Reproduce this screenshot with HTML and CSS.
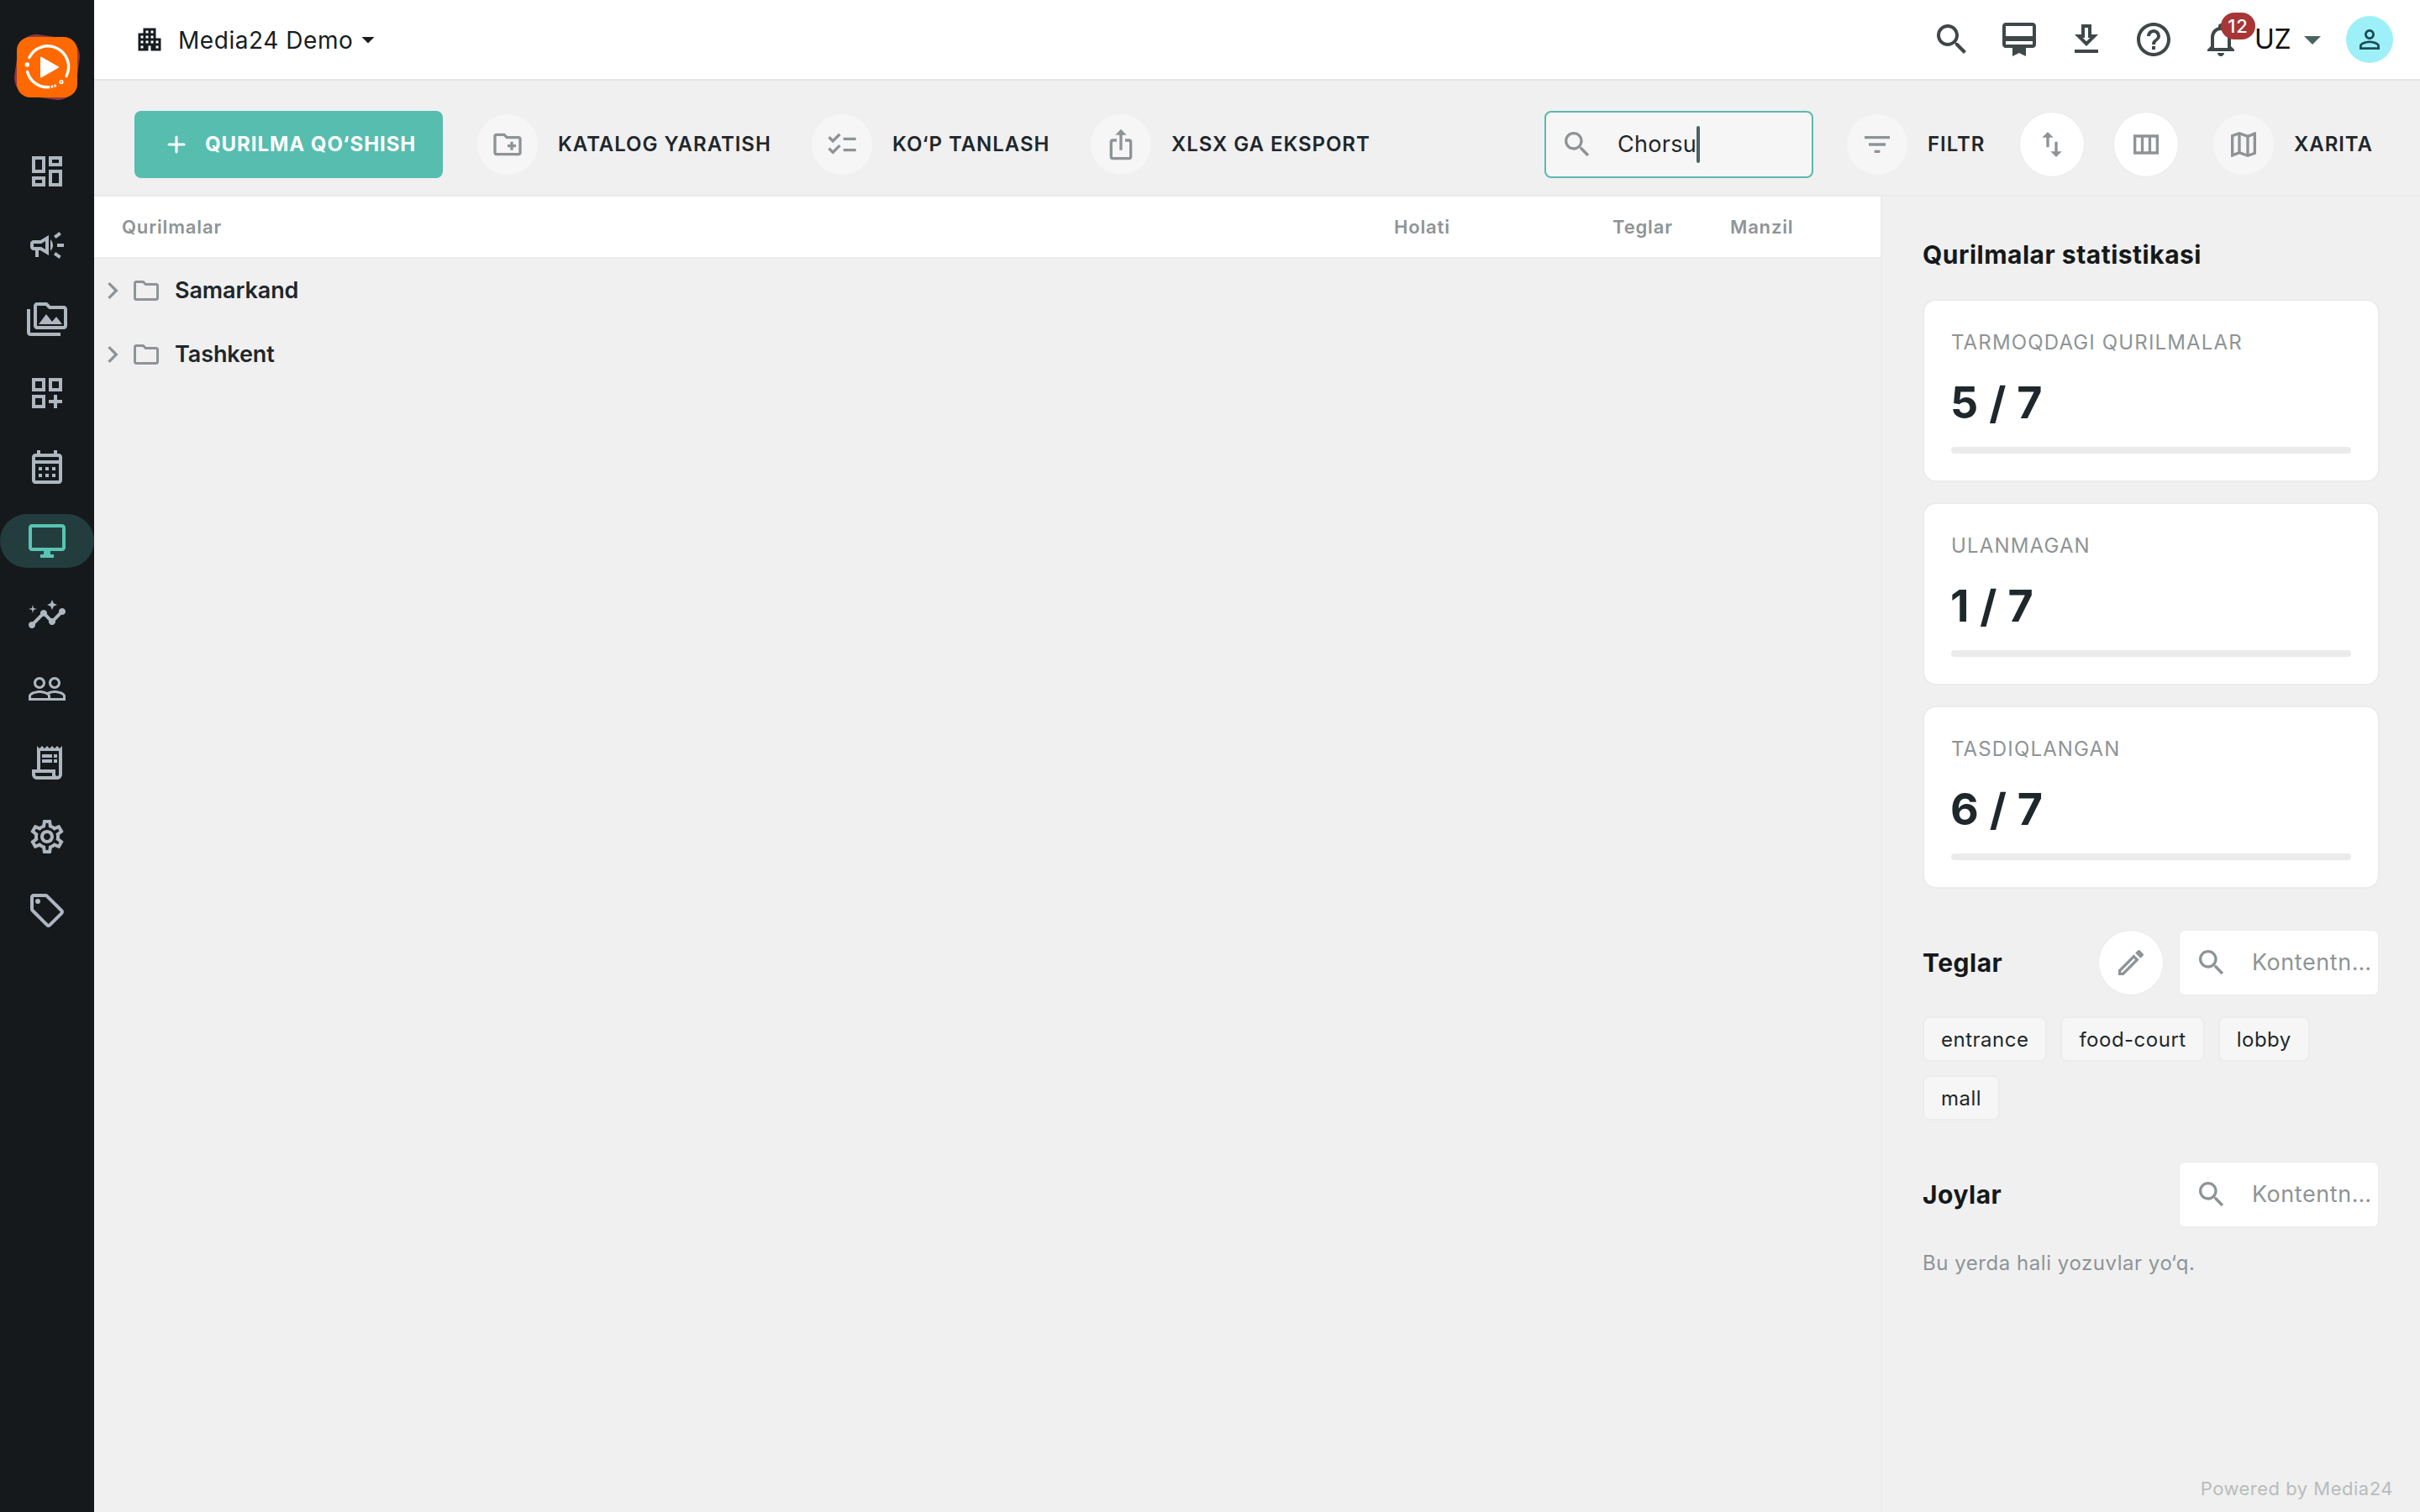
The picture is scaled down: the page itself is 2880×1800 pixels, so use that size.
FILE: index.html
```html
<!DOCTYPE html>
<html lang="uz">
<head>
  <meta charset="UTF-8">
  <meta name="viewport" content="width=device-width, initial-scale=1">
  <title>Media24 - Qurilmalar</title>
  <link rel="stylesheet" href="styles.css">
</head>
<body>

  <svg class="sprite">
    <symbol id="i-search" viewBox="0 0 24 24"><path d="M15.5 14h-.79l-.28-.27C15.41 12.59 16 11.11 16 9.5 16 5.91 13.09 3 9.5 3S3 5.91 3 9.5 5.91 16 9.5 16c1.61 0 3.09-.59 4.23-1.57l.27.28v.79l5 4.99L20.49 19l-4.99-5zm-6 0C7.01 14 5 11.99 5 9.5S7.01 5 9.5 5 14 7.01 14 9.5 11.99 14 9.5 14z"/></symbol>
    <symbol id="i-drop" viewBox="0 0 24 24"><path d="M7 10l5 5 5-5z"/></symbol>
    <symbol id="i-chevron" viewBox="0 0 24 24"><path d="M10 6L8.59 7.41 13.17 12l-4.58 4.59L10 18l6-6z"/></symbol>
    <symbol id="i-folder" viewBox="0 0 24 24"><path d="M9.17 6l2 2H20v10H4V6h5.17M10 4H4c-1.1 0-1.99.9-1.99 2L2 18c0 1.1.9 2 2 2h16c1.1 0 2-.9 2-2V8c0-1.1-.9-2-2-2h-8l-2-2z"/></symbol>
  </svg>

  <aside class="sidebar">
    <svg class="logo" viewBox="0 0 80 80">
      <rect x="3" y="3" width="74" height="74" rx="22" fill="#8f3a40" transform="rotate(8 40 40)"/>
      <rect x="4" y="4" width="72" height="72" rx="16" fill="#ff6900"/>
      <g fill="none" stroke="#fff" stroke-width="3.4" stroke-linecap="round">
        <path d="M18.8 28.5A24.5 24.5 0 0 1 63 50.5"/>
        <path d="M16.6 45.5A24.5 24.5 0 0 0 41 63.8"/>
        <path d="M41 63.8A24.5 24.5 0 0 0 52 61" stroke-width="3" stroke-dasharray="2.4 1.4" stroke-linecap="butt"/>
        <circle cx="57" cy="57.5" r="1.8" stroke-width="1.6"/>
      </g>
      <circle cx="16.3" cy="37" r="2.7" fill="#fff"/>
      <path d="M33 28.5v23L53 40z" fill="#fff" stroke="#fff" stroke-width="2" stroke-linejoin="round"/>
    </svg>
    <nav class="menu">
      <a class="menu-item"><svg viewBox="0 0 24 24"><path d="M19 5v2h-4V5h4M9 5v6H5V5h4m10 8v6h-4v-6h4M9 17v2H5v-2h4M21 3h-8v6h8V3zM11 3H3v10h8V3zm10 8h-8v10h8V11zm-10 4H3v6h8v-6z"/></svg></a>
      <a class="menu-item"><svg viewBox="0 0 24 24"><path d="M18 11v2h4v-2h-4zM16 17.61c.96.71 2.21 1.65 3.2 2.39.4-.53.8-1.07 1.2-1.6-.99-.74-2.24-1.68-3.2-2.4-.4.54-.8 1.08-1.2 1.61zM20.4 5.6c-.4-.53-.8-1.07-1.2-1.6-.99.74-2.24 1.68-3.2 2.4.4.53.8 1.07 1.2 1.6.96-.72 2.21-1.65 3.2-2.4zM4 9c-1.1 0-2 .9-2 2v2c0 1.1.9 2 2 2h1v4h2v-4h1l5 3V6L8 9H4zm5.03 1.71L11 9.53v4.94l-1.97-1.18-.48-.29H4v-2h4.55l.48-.29zM15.5 12c0-1.33-.58-2.53-1.5-3.35v6.69c.92-.81 1.5-2.01 1.5-3.34z"/></svg></a>
      <a class="menu-item"><svg viewBox="0 0 24 24"><path d="M2 6H0v5h.01L0 20c0 1.1.9 2 2 2h18v-2H2V6zm5 9h14l-3.5-4.5-2.5 3.01L11.5 9zM22 4h-8l-2-2H6c-1.1 0-1.99.9-1.99 2L4 16c0 1.1.9 2 2 2h16c1.1 0 2-.9 2-2V6c0-1.1-.9-2-2-2zm0 12H6V4h5.17l2 2H22v10z"/></svg></a>
      <a class="menu-item"><svg viewBox="0 0 24 24"><path d="M3 11h8V3H3v8zm2-6h4v4H5V5zM13 3v8h8V3h-8zm6 6h-4V5h4v4zM3 21h8v-8H3v8zm2-6h4v4H5v-4zM18 13h-2v3h-3v2h3v3h2v-3h3v-2h-3z"/></svg></a>
      <a class="menu-item"><svg viewBox="0 0 24 24"><path d="M19 4h-1V2h-2v2H8V2H6v2H5c-1.11 0-1.99.9-1.99 2L3 20c0 1.1.89 2 2 2h14c1.1 0 2-.9 2-2V6c0-1.1-.9-2-2-2zm0 16H5V10h14v10zm0-12H5V6h14v2zM9 14H7v-2h2v2zm4 0h-2v-2h2v2zm4 0h-2v-2h2v2zm-8 4H7v-2h2v2zm4 0h-2v-2h2v2zm4 0h-2v-2h2v2z"/></svg></a>
      <a class="menu-item active"><svg viewBox="0 0 24 24"><path d="M21 2H3c-1.1 0-2 .9-2 2v12c0 1.1.9 2 2 2h7v2H8v2h8v-2h-2v-2h7c1.1 0 2-.9 2-2V4c0-1.1-.9-2-2-2zm0 14H3V4h18v12z"/></svg></a>
      <a class="menu-item"><svg viewBox="0 0 24 24"><path d="M21 8c-1.45 0-2.26 1.44-1.93 2.51l-3.55 3.56c-.3-.09-.74-.09-1.04 0l-2.55-2.55C12.27 10.45 11.46 9 10 9c-1.45 0-2.27 1.44-1.93 2.52l-4.56 4.55C2.44 15.74 1 16.55 1 18c0 1.1.9 2 2 2 1.45 0 2.26-1.44 1.93-2.51l4.55-4.56c.3.09.74.09 1.04 0l2.55 2.55C12.73 16.55 13.54 18 15 18c1.45 0 2.27-1.44 1.93-2.52l3.56-3.55C21.56 12.26 23 11.45 23 10c0-1.1-.9-2-2-2z"/><path d="M15 9l.94-2.07L18 6l-2.06-.93L15 3l-.92 2.07L12 6l2.08.93zM3.5 11L4 9l2-.5L4 8l-.5-2L3 8l-2 .5L3 9z"/></svg></a>
      <a class="menu-item"><svg viewBox="0 0 24 24"><path d="M16.5 13c-1.2 0-3.07.34-4.5 1-1.43-.67-3.3-1-4.5-1C5.33 13 1 14.08 1 16.25V19h22v-2.75c0-2.17-4.33-3.25-6.5-3.25zm-4 4.5h-10v-1.25c0-.54 2.56-1.75 5-1.75s5 1.21 5 1.75v1.25zm9 0H14v-1.25c0-.46-.2-.86-.52-1.22.88-.3 1.96-.53 3.02-.53 2.44 0 5 1.21 5 1.75v1.25zM7.5 12c1.93 0 3.5-1.57 3.5-3.5S9.43 5 7.5 5 4 6.57 4 8.5 5.57 12 7.5 12zm0-5.5c1.1 0 2 .9 2 2s-.9 2-2 2-2-.9-2-2 .9-2 2-2zm9 5.5c1.93 0 3.5-1.57 3.5-3.5S18.43 5 16.5 5 13 6.57 13 8.5s1.57 3.5 3.5 3.5zm0-5.5c1.1 0 2 .9 2 2s-.9 2-2 2-2-.9-2-2 .9-2 2-2z"/></svg></a>
      <a class="menu-item"><svg viewBox="0 0 24 24"><path d="M19.5 3.5L18 2l-1.5 1.5L15 2l-1.5 1.5L12 2l-1.5 1.5L9 2 7.5 3.5 6 2v14H3v3c0 1.66 1.34 3 3 3h12c1.66 0 3-1.34 3-3V2l-1.5 1.5zM15 20H6c-.55 0-1-.45-1-1v-1h10v2zm4-1c0 .55-.45 1-1 1s-1-.45-1-1v-3H8V5h11v14z"/><path d="M9 7h6v2H9zM16 7h2v2h-2zM9 10h6v2H9zM16 10h2v2h-2z"/></svg></a>
      <a class="menu-item"><svg viewBox="0 0 24 24"><path d="M19.43 12.98c.04-.32.07-.64.07-.98 0-.34-.03-.66-.07-.98l2.11-1.65c.19-.15.24-.42.12-.64l-2-3.46c-.09-.16-.26-.25-.44-.25-.06 0-.12.01-.17.03l-2.49 1c-.52-.4-1.08-.73-1.69-.98l-.38-2.65C14.46 2.18 14.25 2 14 2h-4c-.25 0-.46.18-.49.42l-.38 2.65c-.61.25-1.17.59-1.69.98l-2.49-1c-.06-.02-.12-.03-.18-.03-.17 0-.34.09-.43.25l-2 3.46c-.13.22-.07.49.12.64l2.11 1.65c-.04.32-.07.65-.07.98 0 .33.03.66.07.98l-2.11 1.65c-.19.15-.24.42-.12.64l2 3.46c.09.16.26.25.44.25.06 0 .12-.01.17-.03l2.49-1c.52.4 1.08.73 1.69.98l.38 2.65c.03.24.24.42.49.42h4c.25 0 .46-.18.49-.42l.38-2.65c.61-.25 1.17-.59 1.69-.98l2.49 1c.06.02.12.03.18.03.17 0 .34-.09.43-.25l2-3.46c.12-.22.07-.49-.12-.64l-2.11-1.65zm-1.98-1.71c.04.31.05.52.05.73 0 .21-.02.43-.05.73l-.14 1.13.89.7 1.08.84-.7 1.21-1.27-.51-1.04-.42-.9.68c-.43.32-.84.56-1.25.73l-1.06.43-.16 1.13-.2 1.35h-1.4l-.19-1.35-.16-1.13-1.06-.43c-.43-.18-.83-.41-1.23-.71l-.91-.7-1.06.43-1.27.51-.7-1.21 1.08-.84.89-.7-.14-1.13c-.03-.31-.05-.54-.05-.74s.02-.43.05-.73l.14-1.13-.89-.7-1.08-.84.7-1.21 1.27.51 1.04.42.9-.68c.43-.32.84-.56 1.25-.73l1.06-.43.16-1.13.2-1.35h1.39l.19 1.35.16 1.13 1.06.43c.43.18.83.41 1.23.71l.91.7 1.06-.43 1.27-.51.7 1.21-1.07.85-.89.7.14 1.13zM12 8c-2.21 0-4 1.79-4 4s1.79 4 4 4 4-1.79 4-4-1.79-4-4-4zm0 6c-1.1 0-2-.9-2-2s.9-2 2-2 2 .9 2 2-.9 2-2 2z"/></svg></a>
      <a class="menu-item"><svg viewBox="0 0 24 24"><path d="M21.41 11.41l-8.83-8.83c-.37-.37-.88-.58-1.41-.58H4c-1.1 0-2 .9-2 2v7.17c0 .53.21 1.04.59 1.41l8.83 8.83c.78.78 2.05.78 2.83 0l7.17-7.17c.78-.78.78-2.04-.01-2.83zM12.83 20L4 11.17V4h7.17L20 12.83 12.83 20z"/><circle cx="6.5" cy="6.5" r="1.5"/></svg></a>
    </nav>
  </aside>

  <div class="page">
    <header class="topbar">
      <div class="company">
        <svg class="icon-36 company-icon" viewBox="0 0 24 24"><path d="M17 11V3H7v4H3v14h8v-4h2v4h8V11h-4zM7 19H5v-2h2v2zm0-4H5v-2h2v2zm0-4H5V9h2v2zm4 4H9v-2h2v2zm0-4H9V9h2v2zm0-4H9V5h2v2zm4 8h-2v-2h2v2zm0-4h-2V9h2v2zm0-4h-2V5h2v2zm4 12h-2v-2h2v2zm0-4h-2v-2h2v2z"/></svg>
        <span class="company-name">Media24 Demo</span>
        <svg class="icon-36"><use href="#i-drop"/></svg>
      </div>
      <div class="top-actions">
        <svg class="icon-48"><use href="#i-search"/></svg>
        <svg class="icon-48" viewBox="0 0 24 24"><path d="M20 2H4c-1.11 0-2 .89-2 2v11c0 1.11.89 2 2 2h4v5l4-2 4 2v-5h4c1.11 0 2-.89 2-2V4c0-1.11-.89-2-2-2zm0 13H4v-2h16v2zm0-5H4V4h16v6z"/></svg>
        <svg class="icon-48" viewBox="0 0 24 24"><path d="M19 9h-4V3H9v6H5l7 7 7-7zm-8 2V5h2v6h1.17L12 13.17 9.83 11H11zm-6 7h14v2H5z"/></svg>
        <svg class="icon-48" viewBox="0 0 24 24"><path d="M11 18h2v-2h-2v2zm1-16C6.48 2 2 6.48 2 12s4.48 10 10 10 10-4.48 10-10S17.52 2 12 2zm0 18c-4.41 0-8-3.59-8-8s3.59-8 8-8 8 3.59 8 8-3.59 8-8 8zm0-14c-2.21 0-4 1.79-4 4h2c0-1.1.9-2 2-2s2 .9 2 2c0 2-3 1.75-3 5h2c0-2.25 3-2.5 3-5 0-2.21-1.79-4-4-4z"/></svg>
        <div class="bell">
          <svg class="icon-48" viewBox="0 0 24 24"><path d="M12 22c1.1 0 2-.9 2-2h-4c0 1.1.9 2 2 2zm6-6v-5c0-3.07-1.63-5.64-4.5-6.32V4c0-.83-.67-1.5-1.5-1.5s-1.5.67-1.5 1.5v.68C7.64 5.36 6 7.92 6 11v5l-2 2v1h16v-1l-2-2zm-2 1H8v-6c0-2.48 1.51-4.5 4-4.5s4 2.02 4 4.5v6z"/></svg>
          <span class="badge">12</span>
        </div>
      </div>
      <div class="lang">
        <span class="lang-name">UZ</span>
        <svg class="icon-48"><use href="#i-drop"/></svg>
      </div>
      <div class="avatar">
        <svg class="icon-36" viewBox="0 0 24 24"><path d="M12 5.9c1.16 0 2.1.94 2.1 2.1s-.94 2.1-2.1 2.1S9.9 9.16 9.9 8s.94-2.1 2.1-2.1m0 9c2.97 0 6.1 1.46 6.1 2.1v1.1H5.9V17c0-.64 3.13-2.1 6.1-2.1M12 4C9.79 4 8 5.79 8 8s1.79 4 4 4 4-1.79 4-4-1.79-4-4-4zm0 9c-2.67 0-8 1.34-8 4v3h16v-3c0-2.66-5.33-4-8-4z"/></svg>
      </div>
    </header>

    <div class="toolbar">
      <button class="btn-primary">
        <svg class="icon-36" viewBox="0 0 24 24"><path d="M12 6v12M6 12h12" fill="none" stroke="currentColor" stroke-width="2" stroke-linecap="round"/></svg>
        <span>QURILMA QO‘SHISH</span>
      </button>
      <button class="tool tool-catalog">
        <span class="round"><svg class="icon-40" viewBox="0 0 24 24"><path d="M20 6h-8l-2-2H4c-1.11 0-1.99.89-1.99 2L2 18c0 1.11.89 2 2 2h16c1.11 0 2-.89 2-2V8c0-1.11-.89-2-2-2zm0 12H4V6h5.17l2 2H20v10zm-8-4h2v2h2v-2h2v-2h-2v-2h-2v2h-2z"/></svg></span>
        <span>KATALOG YARATISH</span>
      </button>
      <button class="tool tool-multi">
        <span class="round"><svg class="icon-40" viewBox="0 0 24 24"><path d="M22 7h-9v2h9V7zm0 8h-9v2h9v-2zM5.54 11L2 7.46l1.41-1.41 2.12 2.12 4.24-4.24 1.41 1.41L5.54 11zm0 8L2 15.46l1.41-1.41 2.12 2.12 4.24-4.24 1.41 1.41L5.54 19z"/></svg></span>
        <span>KO‘P TANLASH</span>
      </button>
      <button class="tool tool-export">
        <span class="round"><svg class="icon-40" viewBox="0 0 24 24"><path d="M12 1l4 4.3h-3V16h-2V5.3H8zM20 10v11c0 1.1-.9 2-2 2H6c-1.11 0-2-.9-2-2V10c0-1.11.89-2 2-2h3v2H6v11h12V10h-3V8h3c1.1 0 2 .89 2 2z"/></svg></span>
        <span>XLSX GA EKSPORT</span>
      </button>

      <div class="search">
        <svg class="icon-40"><use href="#i-search"/></svg>
        <span class="search-value">Chorsu</span><span class="caret"></span>
      </div>
      <button class="tool tool-filter">
        <span class="round"><svg class="icon-40" viewBox="0 0 24 24"><path d="M10 18h4v-2h-4v2zM3 6v2h18V6H3zm3 7h12v-2H6v2z"/></svg></span>
        <span>FILTR</span>
      </button>
      <button class="round-white"><svg class="icon-40" viewBox="0 0 24 24"><path d="M16 17.01V10h-2v7.01h-3L15 21l4-3.99h-3zM9 3L5 6.99h3V14h2V6.99h3L9 3z"/></svg></button>
      <button class="round-white"><svg class="icon-40" viewBox="0 0 24 24"><path d="M3 5v14h18V5H3zm5.33 12H5V7h3.33v10zm5.34 0h-3.33V7h3.33v10zM19 17h-3.33V7H19v10z"/></svg></button>
      <button class="tool tool-map">
        <span class="round"><svg class="icon-40" viewBox="0 0 24 24"><path d="M20.5 3l-.16.03L15 5.1 9 3 3.36 4.9c-.21.07-.36.25-.36.48V20.5c0 .28.22.5.5.5l.16-.03L9 18.9l6 2.1 5.64-1.9c.21-.07.36-.25.36-.48V3.5c0-.28-.22-.5-.5-.5zM10 5.47l4 1.4v11.66l-4-1.4V5.47zm-5 .99l3-1.01v11.7l-3 1.16V6.46zm14 11.08l-3 1.01V6.86l3-1.16v11.84z"/></svg></span>
        <span>XARITA</span>
      </button>
    </div>

    <div class="content">
      <main class="devices">
        <div class="table-head">
          <span>Qurilmalar</span>
          <span>Holati</span>
          <span>Teglar</span>
          <span>Manzil</span>
        </div>
        <div class="folder-row">
          <svg class="icon-40"><use href="#i-chevron"/></svg>
          <svg class="icon-36"><use href="#i-folder"/></svg>
          <span>Samarkand</span>
        </div>
        <div class="folder-row">
          <svg class="icon-40"><use href="#i-chevron"/></svg>
          <svg class="icon-36"><use href="#i-folder"/></svg>
          <span>Tashkent</span>
        </div>
      </main>

      <aside class="stats">
        <h2 class="stats-title">Qurilmalar statistikasi</h2>
        <div class="card">
          <div class="card-label">TARMOQDAGI QURILMALAR</div>
          <div class="card-value">5 / 7</div>
          <div class="bar"></div>
        </div>
        <div class="card">
          <div class="card-label">ULANMAGAN</div>
          <div class="card-value">1 / 7</div>
          <div class="bar"></div>
        </div>
        <div class="card">
          <div class="card-label">TASDIQLANGAN</div>
          <div class="card-value">6 / 7</div>
          <div class="bar"></div>
        </div>

        <div class="section-head tags-head">
          <h2>Teglar</h2>
          <button class="round-white edit"><svg class="icon-40" viewBox="0 0 24 24"><path d="M14.06 9.02l.92.92L5.92 19H5v-.92l9.06-9.06M17.66 3c-.25 0-.51.1-.7.29l-1.83 1.83 3.75 3.75 1.83-1.83c.39-.39.39-1.02 0-1.41l-2.34-2.34c-.2-.2-.45-.29-.71-.29zm-3.6 3.19L3 17.25V21h3.75L17.81 9.94l-3.75-3.75z"/></svg></button>
          <div class="mini-search">
            <svg class="icon-40"><use href="#i-search"/></svg>
            <span>Kontentn…</span>
          </div>
        </div>
        <div class="tags">
          <span class="tag">entrance</span>
          <span class="tag">food-court</span>
          <span class="tag">lobby</span>
          <span class="tag">mall</span>
        </div>

        <div class="section-head places-head">
          <h2>Joylar</h2>
          <div class="mini-search">
            <svg class="icon-40"><use href="#i-search"/></svg>
            <span>Kontentn…</span>
          </div>
        </div>
        <p class="empty">Bu yerda hali yozuvlar yo‘q.</p>
        <footer class="powered">Powered by Media24</footer>
      </aside>
    </div>
  </div>

</body>
</html>
```
FILE: styles.css
```css
* {
  box-sizing: border-box;
}

body {
  margin: 0;
  height: 100vh;
  display: flex;
  overflow: hidden;
  background: #f0f0f0;
  color: #1e272c;
  font-family: Inter, "Liberation Sans", sans-serif;
  font-size: 24px;
  line-height: 1.2;
  white-space: nowrap;
}

svg {
  display: block;
  flex: none;
  fill: currentColor;
}

button {
  font: inherit;
  color: inherit;
  letter-spacing: inherit;
  border: none;
  background: none;
  padding: 0;
  cursor: pointer;
}

h2, p {
  margin: 0;
}

.sprite {
  position: absolute;
  width: 0;
  height: 0;
}

.icon-36 {
  width: 36px;
  height: 36px;
}

.icon-40 {
  width: 40px;
  height: 40px;
}

.icon-48 {
  width: 48px;
  height: 48px;
}

/* Sidebar */

.sidebar {
  width: 112px;
  flex: none;
  background: #15191c;
  padding-top: 40px;
}

.logo {
  width: 80px;
  height: 80px;
  margin: 0 16px;
  overflow: visible;
}

.menu {
  display: flex;
  flex-direction: column;
  gap: 24px;
  margin-top: 52px;
}

.menu-item {
  height: 64px;
  border-radius: 32px;
  display: flex;
  align-items: center;
  justify-content: center;
  color: #aeb6bf;
}

.menu-item svg {
  width: 48px;
  height: 48px;
}

.menu-item.active {
  background: #233d3e;
  color: #58c4b3;
}

.page {
  flex: 1;
  min-width: 0;
  display: flex;
  flex-direction: column;
}

/* Top bar */

.topbar {
  height: 96px;
  flex: none;
  display: flex;
  align-items: center;
  background: #fff;
  border-bottom: 2px solid #e2e6e6;
  padding: 0 32px 0 48px;
  color: #3f4849;
}

.company {
  display: flex;
  align-items: center;
  color: #171d1f;
}

.company-name {
  font-size: 28px;
  letter-spacing: 0.55px;
  line-height: 34px;
  margin-left: 16px;
  padding-top: 1px;
}

.top-actions {
  display: flex;
  gap: 32px;
  margin-left: auto;
}

.bell {
  position: relative;
}

.badge {
  position: absolute;
  left: 24px;
  top: -8px;
  width: 41px;
  height: 32px;
  border-radius: 16px;
  background: #a73637;
  color: #fff;
  font-size: 22px;
  font-weight: 500;
  letter-spacing: 0.8px;
  line-height: 32px;
  text-align: center;
}

.lang {
  display: flex;
  align-items: center;
  margin-left: 16px;
}

.lang-name {
  width: 45px;
  font-size: 32px;
  letter-spacing: -0.4px;
  color: #111;
}

.lang svg {
  color: #4a6360;
}

.avatar {
  width: 56px;
  height: 56px;
  border-radius: 50%;
  margin-left: 16px;
  display: flex;
  align-items: center;
  justify-content: center;
  background: #9ef0f8;
  color: #1d4e55;
}

/* Toolbar */

.toolbar {
  height: 138px;
  flex: none;
  display: flex;
  align-items: center;
  padding: 16px 54px 0 48px;
  border-bottom: 2px solid #ebebeb;
  font-weight: 600;
  letter-spacing: 0.95px;
}

.btn-primary {
  width: 367px;
  height: 80px;
  border-radius: 8px;
  display: flex;
  align-items: center;
  gap: 16px;
  padding-left: 32px;
  margin-right: 41px;
  background: #56bdaf;
  color: #fff;
  font-weight: 700;
}

.tool {
  display: flex;
  align-items: center;
  gap: 24px;
}

.tool-catalog {
  width: 398px;
}

.tool-multi {
  width: 332px;
}

.round {
  width: 72px;
  height: 72px;
  flex: none;
  border-radius: 50%;
  display: flex;
  align-items: center;
  justify-content: center;
  background: #f6f6f6;
  color: #8e9496;
}

.search {
  width: 320px;
  height: 80px;
  display: flex;
  align-items: center;
  margin-left: auto;
  padding-left: 17px;
  border: 2px solid #5ab9ac;
  border-radius: 8px;
  background: #f6f6f6;
  font-size: 27px;
  font-weight: 400;
  letter-spacing: 0.3px;
}

.search svg {
  color: #8e9496;
  margin-right: 28px;
}

.caret {
  width: 4px;
  height: 44px;
  border-radius: 2px;
  background: #4a6360;
}

.tool-filter {
  width: 166px;
  margin: 0 40px;
}

.round-white {
  width: 76px;
  height: 76px;
  flex: none;
  border-radius: 50%;
  display: flex;
  align-items: center;
  justify-content: center;
  background: #fff;
  color: #8e9496;
  box-shadow: 0 0 0 1px #ebebeb;
}

.toolbar .round-white {
  margin-right: 36px;
}

.tool-map {
  width: 192px;
  margin-left: 6px;
}

/* Device list */

.content {
  flex: 1;
  display: flex;
}

.devices {
  flex: 1;
}

.table-head {
  height: 74px;
  display: grid;
  grid-template-columns: 1514px 260px 140px 1fr;
  align-items: center;
  padding-left: 33px;
  background: #fff;
  border-bottom: 2px solid #ebebeb;
  color: #8e9496;
  font-size: 22px;
  font-weight: 600;
  letter-spacing: 0.85px;
}

.folder-row {
  height: 76px;
  display: flex;
  align-items: center;
  font-size: 27px;
  font-weight: 600;
  letter-spacing: -0.1px;
}

.folder-row svg {
  color: #8e9496;
}

.folder-row .icon-40 {
  margin-left: 2px;
}

.folder-row .icon-36 {
  margin: 0 16px 0 2px;
}

/* Statistics panel */

.stats {
  width: 642px;
  flex: none;
  display: flex;
  flex-direction: column;
  padding: 51px 48px 0 48px;
  border-left: 2px solid #ebebeb;
}

.stats h2 {
  font-size: 30px;
  font-weight: 700;
  line-height: 36px;
  letter-spacing: 0.5px;
  color: #15191b;
}

.stats-title {
  margin-bottom: 35px;
}

.card {
  height: 218px;
  margin-bottom: 24px;
  padding: 33px 32px 0;
  border: 2px solid #ebebeb;
  border-radius: 16px;
  background: #fff;
}

.card-label {
  line-height: 34px;
  letter-spacing: 1.15px;
  color: #8e9496;
}

.card-value {
  margin: 23px 0 0 -1px;
  font-size: 52px;
  font-weight: 700;
  line-height: 64px;
  letter-spacing: 0.3px;
}

.bar {
  height: 8px;
  margin-top: 20px;
  border-radius: 4px;
  background: #ebebeb;
}

.section-head {
  display: flex;
  align-items: center;
  height: 76px;
}

.section-head h2 {
  margin-right: auto;
}

.tags-head {
  margin-top: 26px;
}

.edit {
  margin-right: 20px;
}

.mini-search {
  width: 236px;
  height: 76px;
  margin-right: 2px;
  display: flex;
  align-items: center;
  padding-left: 18px;
  border-radius: 6px;
  background: #fff;
  box-shadow: 0 0 0 1px #ebebeb;
  font-size: 27px;
  letter-spacing: 0.55px;
  color: #8e9496;
}

.mini-search span {
  margin-left: 28px;
}

.tags {
  display: flex;
  flex-wrap: wrap;
  gap: 16px;
  margin-top: 26px;
}

.tag {
  height: 54px;
  padding: 0 20px;
  border: 2px solid #ececec;
  border-radius: 8px;
  background: #f6f6f6;
  line-height: 51px;
  letter-spacing: 0.5px;
}

.places-head {
  margin-top: 50px;
}

.empty {
  margin-top: 30px;
  letter-spacing: 0.54px;
  color: #8e9496;
}

.powered {
  margin: auto -16px 15px auto;
  font-size: 22px;
  letter-spacing: 0.5px;
  color: #b9bcbd;
}
```
